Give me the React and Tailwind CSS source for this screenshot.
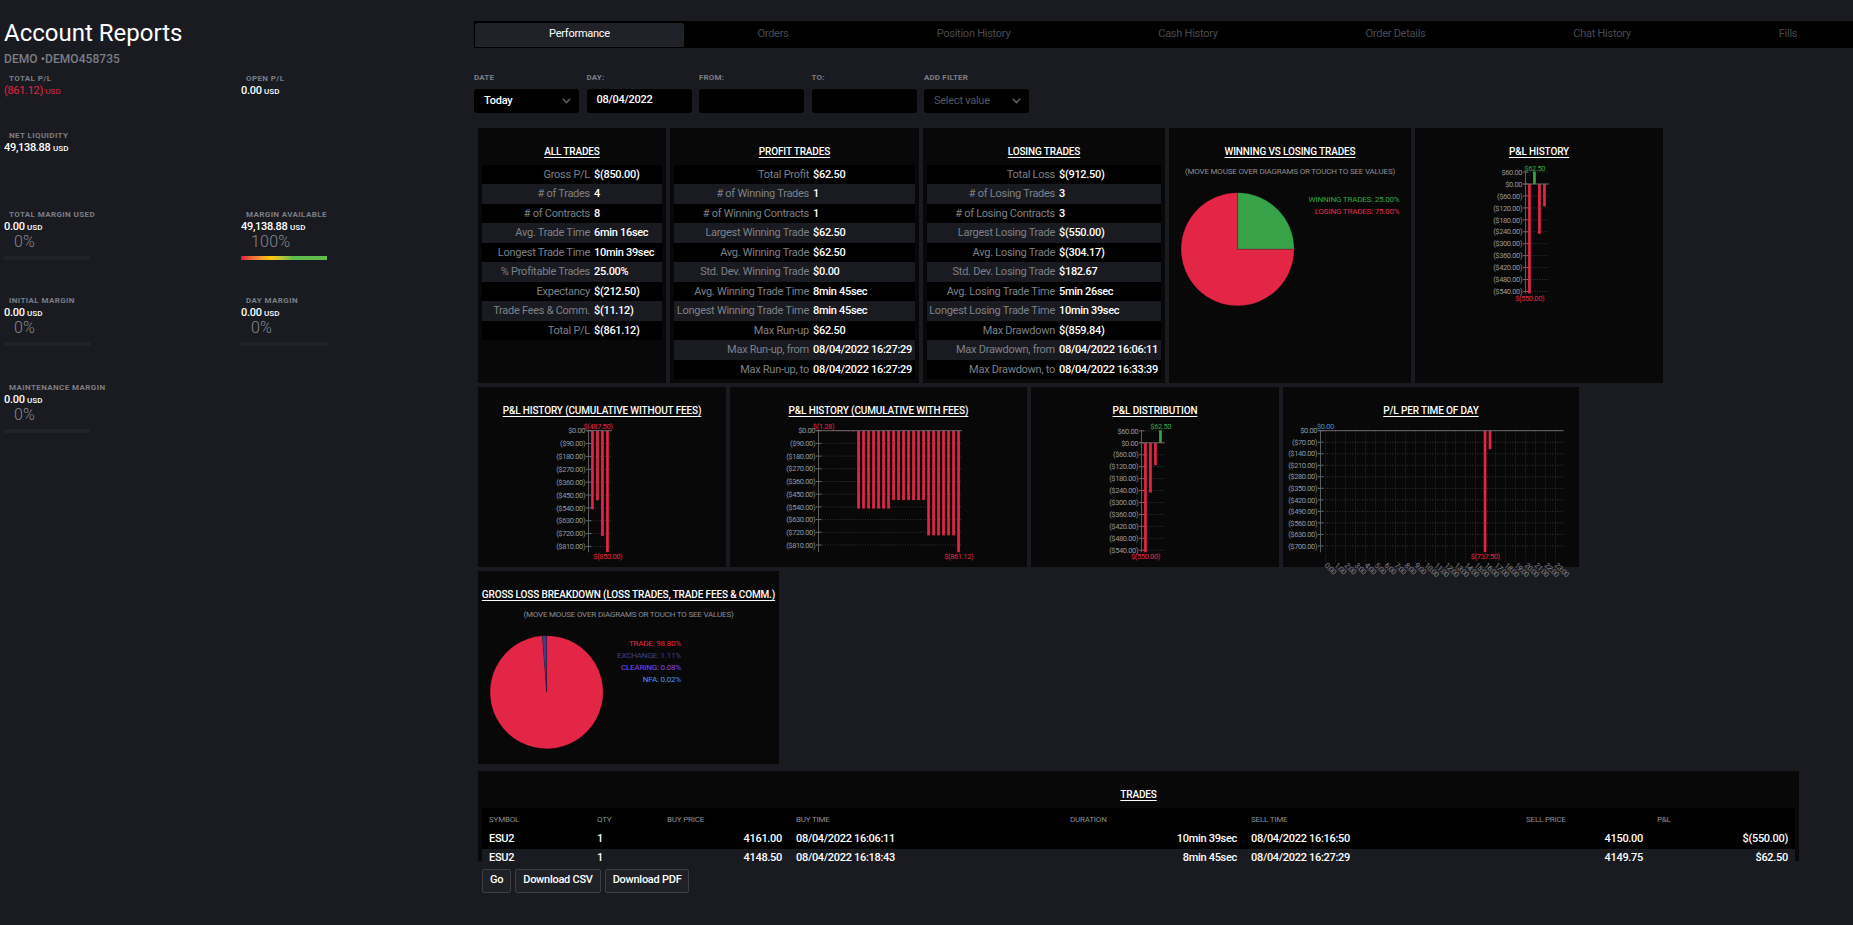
import React from "react";

const RED = "#e32645";
const GREEN = "#37a349";

function Metric({ label, value, loss, percent, full }) {
  return (
    <div className="flex flex-col">
      <div className="h-3 pl-[5px] text-[8px] leading-3 font-bold tracking-[0.4px] text-[#7b7e86]">{label}</div>
      <div className={"h-3 text-[11px] leading-3 tracking-[-0.31px] " + (loss ? "text-[#e32645]" : "font-medium text-white")}>
        {value} <span className="text-[8px] tracking-[0.06px]">USD</span>
      </div>
      {percent && (
        <>
          <div className="mt-px h-4 pl-[10px] text-[16px] leading-4 font-light tracking-[0.2px] text-[#858891]">{percent}</div>
          <div
            className={
              "mt-[6px] h-1 w-[86px] " +
              (full ? "bg-linear-to-r from-[#dc0f3c] from-0% via-[#ffc800] via-35% to-[#5fbd4b] to-60%" : "bg-[#222327]")
            }
          />
        </>
      )}
    </div>
  );
}

function Sidebar() {
  return (
    <aside className="w-[474px] shrink-0 pl-1">
      <h1 className="pt-[18px] text-[24px] leading-[30px] text-white">Account Reports</h1>
      <div className="h-[25px] pt-[3px] text-[12px] leading-4 font-medium tracking-[0.07px] text-[#7b7e86]">DEMO •DEMO458735</div>
      <div className="grid grid-cols-[237px_237px] grid-rows-[57px_79px_86px_87px_87px]">
        <Metric label="TOTAL P/L" value="(861.12)" loss />
        <Metric label="OPEN P/L" value="0.00" />
        <Metric label="NET LIQUIDITY" value="49,138.88" />
        <span />
        <Metric label="TOTAL MARGIN USED" value="0.00" percent="0%" />
        <Metric label="MARGIN AVAILABLE" value="49,138.88" percent="100%" full />
        <Metric label="INITIAL MARGIN" value="0.00" percent="0%" />
        <Metric label="DAY MARGIN" value="0.00" percent="0%" />
        <Metric label="MAINTENANCE MARGIN" value="0.00" percent="0%" />
      </div>
    </aside>
  );
}

const TABS = [
  ["Orders", "w-[178px]"],
  ["Position History", "w-[223px]"],
  ["Cash History", "w-[206px]"],
  ["Order Details", "w-[209px]"],
  ["Chat History", "w-[204px]"],
  ["Fills", "w-[168px]"],
];

function Tabs() {
  return (
    <nav className="flex h-[27px] overflow-hidden bg-black pl-px text-[11px] leading-[22px] tracking-[-0.26px]">
      <div className="mt-[2px] mb-px w-[209px] shrink-0 rounded-t-[3px] bg-[#212228] text-center text-white">Performance</div>
      {TABS.map(([name, width]) => (
        <div key={name} className={"mt-[2px] shrink-0 text-center text-[#484a50] " + width}>{name}</div>
      ))}
    </nav>
  );
}

function Field({ label, value, muted, select }) {
  return (
    <div className="w-[105px]">
      <div className="h-3 text-[8px] leading-3 font-bold tracking-[0.15px] text-[#7b7e86]">{label}</div>
      <div className="mt-[5px] flex h-6 items-center justify-between rounded-[3px] bg-black pr-[8px] pl-[10px]">
        <span className={"text-[11px] tracking-[-0.25px] " + (muted ? "text-[#54565c]" : "font-medium text-white") + (select ? " leading-6" : " pb-[2px] leading-[22px]")}>
          {value}
        </span>
        {select && (
          <svg width="9" height="6" viewBox="0 0 9 6" fill="none" stroke="#5d5f65" strokeWidth="1.5">
            <path d="M0.8 0.8L4.5 4.6L8.2 0.8" />
          </svg>
        )}
      </div>
    </div>
  );
}

function Card({ title, width, children }) {
  return (
    <section className={"flex shrink-0 flex-col bg-[#080808] " + width}>
      <h2 className="h-[37px] pt-4 text-center text-[10px] leading-4 font-medium tracking-[-0.14px] whitespace-nowrap text-white underline underline-offset-2">{title}</h2>
      {children}
    </section>
  );
}

function Stats({ rows, cols }) {
  return (
    <div className="mx-1 flex flex-col text-[11px] leading-[19px] tracking-[-0.3px] whitespace-nowrap">
      {rows.map(([label, value], i) => (
        <div key={label} className={"grid " + cols + (i % 2 ? " h-5 bg-[#1a1b20]" : " h-[19px] bg-black")}>
          <span className="text-right tracking-[-0.27px] text-[#7d8088]">{label}</span>
          <span className="pl-[4px] font-medium text-white">{value}</span>
        </div>
      ))}
    </div>
  );
}

const ALL = [
  ["Gross P/L", "$(850.00)"],
  ["# of Trades", "4"],
  ["# of Contracts", "8"],
  ["Avg. Trade Time", "6min 16sec"],
  ["Longest Trade Time", "10min 39sec"],
  ["% Profitable Trades", "25.00%"],
  ["Expectancy", "$(212.50)"],
  ["Trade Fees & Comm.", "$(11.12)"],
  ["Total P/L", "$(861.12)"],
];

const PROFIT = [
  ["Total Profit", "$62.50"],
  ["# of Winning Trades", "1"],
  ["# of Winning Contracts", "1"],
  ["Largest Winning Trade", "$62.50"],
  ["Avg. Winning Trade", "$62.50"],
  ["Std. Dev. Winning Trade", "$0.00"],
  ["Avg. Winning Trade Time", "8min 45sec"],
  ["Longest Winning Trade Time", "8min 45sec"],
  ["Max Run-up", "$62.50"],
  ["Max Run-up, from", "08/04/2022 16:27:29"],
  ["Max Run-up, to", "08/04/2022 16:27:29"],
];

const LOSING = [
  ["Total Loss", "$(912.50)"],
  ["# of Losing Trades", "3"],
  ["# of Losing Contracts", "3"],
  ["Largest Losing Trade", "$(550.00)"],
  ["Avg. Losing Trade", "$(304.17)"],
  ["Std. Dev. Losing Trade", "$182.67"],
  ["Avg. Losing Trade Time", "5min 26sec"],
  ["Longest Losing Trade Time", "10min 39sec"],
  ["Max Drawdown", "$(859.84)"],
  ["Max Drawdown, from", "08/04/2022 16:06:11"],
  ["Max Drawdown, to", "08/04/2022 16:33:39"],
];

function slicePath(cx, cy, r, from, to) {
  const at = (t) => [cx + r * Math.sin(t * 2 * Math.PI), cy - r * Math.cos(t * 2 * Math.PI)];
  const [x0, y0] = at(from);
  const [x1, y1] = at(to);
  return `M${cx} ${cy}L${x0} ${y0}A${r} ${r} 0 ${to - from > 0.5 ? 1 : 0} 1 ${x1} ${y1}Z`;
}

function Pie({ slices, cx, legend, legendX, legendY, width }) {
  let start = 0;
  return (
    <>
      <div className="mt-px h-3 text-center text-[8px] leading-3 tracking-[-0.19px] whitespace-nowrap text-[#8a8d95]">
        (MOVE MOUSE OVER DIAGRAMS OR TOUCH TO SEE VALUES)
      </div>
      <svg width={width} height="132" className="block">
        {slices.map(([share, color]) => {
          const path = slicePath(cx, 71.2, 56.5, start, start + share);
          start += share;
          return <path key={color} d={path} fill={color} stroke="#000" strokeOpacity="0.35" strokeWidth="0.4" />;
        })}
        {legend.map(([text, color], i) => (
          <text key={text} x={legendX} y={legendY + i * 12} fill={color} textAnchor="end" className="text-[8px] tracking-[-0.19px]">
            {text}
          </text>
        ))}
      </svg>
    </>
  );
}

const money = (v) => (v < 0 ? `($${(-v).toFixed(2)})` : `$${v.toFixed(2)}`);

/* left: x of the value axis, zero: y of the base line, scale: pixels per dollar */
function BarChart({ width, height, left, right, zero, top, bottom, max, step, count, scale, bars, marks, hours }) {
  const ticks = Array.from({ length: count }, (_, i) => max - i * step);
  const small = "text-[7.5px] tracking-[-0.38px]";
  return (
    <svg width={width} height={height} className="block overflow-visible">
      {ticks.map((v) => {
        const y = zero - v * scale;
        return (
          <g key={v}>
            {v !== 0 && <line x1={left + 4} x2={right} y1={y} y2={y} stroke="#34353a" strokeWidth="1" strokeDasharray="1 1.5" />}
            <line x1={left - 2.5} x2={left + 3} y1={y} y2={y} stroke="#6b6d72" strokeWidth="1" />
            <text x={left - 3.3} y={y + 2.7} textAnchor="end" fill="#94969d" className={small}>{money(v)}</text>
          </g>
        );
      })}
      {hours &&
        Array.from({ length: 24 }, (_, h) => (
          <g key={h}>
            <line x1={left + 5 + h * 10} x2={left + 5 + h * 10} y1={zero} y2={zero + 131} stroke="#2b2c31" strokeWidth="1" strokeDasharray="1 1.5" />
            <text transform={`translate(${left + 3.5 + h * 10} ${zero + 135}) rotate(45)`} fill="#85878e" className={small}>{h + ":00"}</text>
          </g>
        ))}
      <line x1={left} x2={left} y1={top} y2={bottom} stroke="#5a5c61" strokeWidth="1" />
      {bars.map(([offset, v]) => (
        <rect key={offset} x={left + offset - 1.4} width="2.7" y={v < 0 ? zero : zero - v * scale} height={Math.abs(v) * scale} fill={v < 0 ? RED : GREEN} />
      ))}
      <line x1={left - 2} x2={right} y1={zero} y2={zero} stroke="#6b6d72" strokeWidth="1" />
      {marks.map(([text, x, y, color]) => (
        <text key={text} x={left + x} y={y} fill={color} textAnchor="middle" className={small}>{text}</text>
      ))}
    </svg>
  );
}

const WITH_FEES = Array.from({ length: 28 }, (_, i) => [
  5.1 + i * 5,
  i < 7 ? -1.28 - i * 0.5 : i < 14 ? -552 : i < 21 ? -492 : i < 27 ? -742 : -861.12,
]).map(([x, v], i) => [x, i >= 21 && i < 27 ? -742 : v]);

const COLUMNS = ["SYMBOL", "QTY", "BUY PRICE", "BUY TIME", "DURATION", "SELL TIME", "SELL PRICE", "P&L"];
const RIGHT_ALIGNED = [2, 4, 6, 7];
const TRADES = [
  ["ESU2", "1", "4161.00", "08/04/2022 16:06:11", "10min 39sec", "08/04/2022 16:16:50", "4150.00", "$(550.00)"],
  ["ESU2", "1", "4148.50", "08/04/2022 16:18:43", "8min 45sec", "08/04/2022 16:27:29", "4149.75", "$62.50"],
];
const TRADE_GRID = "grid grid-cols-[108px_70px_129px_274px_181px_275px_131px_145px] *:px-[7px] ";

function Trades() {
  return (
    <div className="mt-[7px] ml-1 h-[90px] w-[1321px] overflow-hidden">
      <Card title="TRADES" width="w-[1321px]">
        <div className="mx-1 whitespace-nowrap">
          <div className={TRADE_GRID + "h-[22px] bg-black text-[8px] leading-[23px] tracking-[-0.2px] text-[#8a8d95]"}>
            {COLUMNS.map((c) => (
              <span key={c}>{c}</span>
            ))}
          </div>
          {TRADES.map((row, i) => (
            <div key={i} className={TRADE_GRID + "text-[11px] font-medium tracking-[-0.3px] text-white " + (i % 2 ? "h-[19px] bg-[#1a1b20] leading-[17px]" : "h-[19px] bg-black leading-[18px]")}>
              {row.map((cell, c) => (
                <span key={c} className={RIGHT_ALIGNED.includes(c) ? "text-right" : "text-left"}>{cell}</span>
              ))}
            </div>
          ))}
        </div>
      </Card>
    </div>
  );
}

function Button({ children }) {
  return (
    <button className="h-6 rounded-[2px] border border-[#3d3e44] bg-[#202126] px-[7px] pb-[2px] text-[11px] leading-5 font-medium tracking-[-0.26px] text-white">{children}</button>
  );
}

export default function App() {
  return (
    <div className="flex h-[925px] w-[1853px] overflow-hidden bg-[#1a1b20] font-['Roboto',sans-serif]">
      <Sidebar />
      <main className="min-w-0 flex-1 pt-[21px]">
        <Tabs />
        <div className="mt-6 flex gap-[7.5px]">
          <Field label="DATE" value="Today" select />
          <Field label="DAY:" value="08/04/2022" />
          <Field label="FROM:" value="" />
          <Field label="TO:" value="" />
          <Field label="ADD FILTER" value="Select value" muted select />
        </div>
        <div className="mt-[15px] ml-1 flex flex-col gap-1">
          <div className="flex h-[255px] gap-1">
            <Card title="ALL TRADES" width="w-[188px]">
              <Stats rows={ALL} cols="grid-cols-[108px_1fr]" />
            </Card>
            <Card title="PROFIT TRADES" width="w-[249px]">
              <Stats rows={PROFIT} cols="grid-cols-[135px_1fr]" />
            </Card>
            <Card title="LOSING TRADES" width="w-[242px]">
              <Stats rows={LOSING} cols="grid-cols-[128px_1fr]" />
            </Card>
            <Card title="WINNING VS LOSING TRADES" width="w-[242px]">
              <Pie
                width="242"
                cx={68.6}
                slices={[[0.25, GREEN], [0.75, RED]]}
                legendX={230.5}
                legendY={24.3}
                legend={[["WINNING TRADES: 25.00%", GREEN], ["LOSING TRADES: 75.00%", RED]]}
              />
            </Card>
            <Card title="P&L HISTORY" width="w-[248px]">
              <BarChart
                width="248" height="218" left={110.5} right={134} zero={19} top={6.5} bottom={128.3}
                max={60} step={60} count={11} scale={0.199}
                bars={[[4, -550], [9, 62.5], [14, -250], [19, -112.5]]}
                marks={[["$62.50", 9.2, 5.5, GREEN], ["$(550.00)", 4.2, 135.8, RED]]}
              />
            </Card>
          </div>
          <div className="flex h-[180px] gap-1">
            <Card title="P&L HISTORY (CUMULATIVE WITHOUT FEES)" width="w-[248px]">
              <BarChart
                width="248" height="143" left={110.5} right={133.7} zero={6.7} top={6.5} bottom={128.3}
                max={0} step={90} count={10} scale={0.1429}
                bars={[[4, -550], [9, -487.5], [14, -737.5], [19, -850]]}
                marks={[["$(487.50)", 9.5, 5.2, RED], ["$(850.00)", 19.3, 135.2, RED]]}
              />
            </Card>
            <Card title="P&L HISTORY (CUMULATIVE WITH FEES)" width="w-[297px]">
              <BarChart
                width="297" height="143" left={88.5} right={232} zero={6.7} top={6.5} bottom={128.3}
                max={0} step={90} count={10} scale={0.1411}
                bars={WITH_FEES}
                marks={[["$(1.28)", 5, 5.2, RED], ["$(861.12)", 140.2, 135.2, RED]]}
              />
            </Card>
            <Card title="P&L DISTRIBUTION" width="w-[248px]">
              <BarChart
                width="248" height="143" left={110.5} right={133.7} zero={18.8} top={6.5} bottom={128}
                max={60} step={60} count={11} scale={0.199}
                bars={[[4, -550], [9, -250], [14, -112.5], [19, 62.5]]}
                marks={[["$62.50", 19.2, 5.2, GREEN], ["$(550.00)", 4, 135.2, RED]]}
              />
            </Card>
            <Card title="P/L PER TIME OF DAY" width="w-[296px]">
              <BarChart
                width="296" height="143" left={37.5} right={280.5} zero={6.7} top={6.5} bottom={128.3} hours
                max={0} step={70} count={11} scale={0.1646}
                bars={[[164.6, -737.5], [169.6, -112.5]]}
                marks={[["$0.00", 5, 5.2, "#3f8fc4"], ["$(737.50)", 164.8, 135.2, RED]]}
              />
            </Card>
          </div>
          <div className="flex h-[193px]">
            <Card title="GROSS LOSS BREAKDOWN (LOSS TRADES, TRADE FEES & COMM.)" width="w-[301px]">
              <Pie
                width="301"
                cx={68.6}
                slices={[[0.988, RED], [0.0111, "#41408a"], [0.0009, "#8446f0"]]}
                legendX={203}
                legendY={25.3}
                legend={[
                  ["TRADE: 98.80%", RED],
                  ["EXCHANGE: 1.11%", "#41408a"],
                  ["CLEARING: 0.08%", "#8446f0"],
                  ["NFA: 0.02%", "#4a90f5"],
                ]}
              />
            </Card>
          </div>
        </div>
        <Trades />
        <div className="mt-2 ml-2 flex gap-1">
          <Button>Go</Button>
          <Button>Download CSV</Button>
          <Button>Download PDF</Button>
        </div>
      </main>
    </div>
  );
}
